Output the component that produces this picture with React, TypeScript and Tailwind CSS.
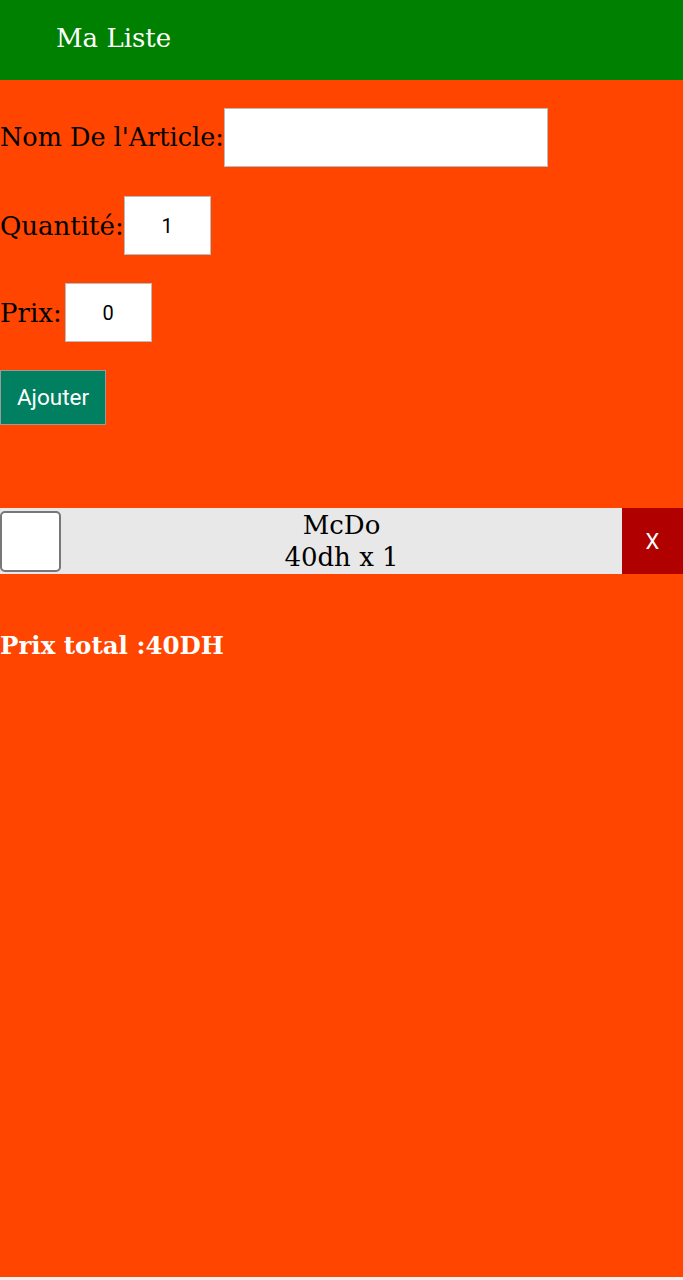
import React from "react";

export default function App() {
  return (
    <div className="w-[683px] h-[1280px] bg-[#eeeeee]">
      <div className="h-[1277px] bg-[#ff4500] flex flex-col font-['DejaVu_Serif',serif]">
        <header className="h-[80px] bg-[#008000] flex items-center pl-[56px] shrink-0 pb-[3px]">
          <span className="text-white text-[26px]">Ma Liste</span>
        </header>
        <main className="flex flex-col pt-[28px]">
          <div className="flex items-center h-[59px] mb-[29px]">
            <span className="text-[25.5px] text-black leading-none">Nom De l'Article:</span>
            <input className="w-[324px] h-[59px] bg-white border border-[#bbbbbb] outline-none px-2 text-[20px] text-center font-['Roboto',sans-serif]" defaultValue="" />
          </div>
          <div className="flex items-center h-[59px] mb-[28px]">
            <span className="text-[26px] text-black leading-none">Quantité:</span>
            <input className="w-[87px] h-[59px] bg-white border border-[#bbbbbb] outline-none text-[20px] text-center text-black font-['Roboto',sans-serif]" defaultValue="1" />
          </div>
          <div className="flex items-center h-[59px] mb-[28px]">
            <span className="text-[26px] text-black leading-none pr-[3px]">Prix:</span>
            <input className="w-[87px] h-[59px] bg-white border border-[#bbbbbb] outline-none text-[20px] text-center text-black font-['Roboto',sans-serif]" defaultValue="0" />
          </div>
          <div className="flex">
            <button className="w-[106px] h-[55px] bg-[#008060] border border-[#9a9a9a] text-white text-[22.5px] font-['Roboto',sans-serif]">Ajouter</button>
          </div>
          <div className="mt-[83px] h-[66px] bg-[#e8e8e8] flex items-center">
            <div className="w-[61px] h-[61px] bg-white border-2 border-[#777777] rounded-[5px] shrink-0" />
            <div className="flex-1 flex flex-col items-center text-[26px] text-black leading-[32px]">
              <span>McDo</span>
              <span>40dh x 1</span>
            </div>
            <button className="w-[61px] h-[66px] bg-[#b00000] text-white text-[22px] shrink-0 font-['Roboto',sans-serif]">X</button>
          </div>
          <div className="mt-[56px] text-white font-bold text-[24.5px] leading-[32px]">Prix total :40DH</div>
        </main>
      </div>
    </div>
  );
}
